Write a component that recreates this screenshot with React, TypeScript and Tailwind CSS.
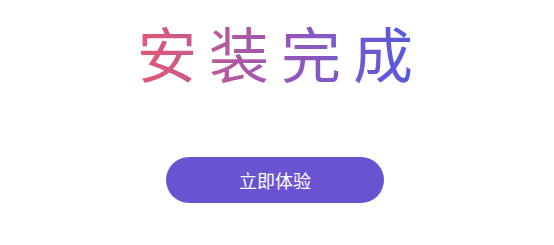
export default function App() {
  return (
    <div className="flex h-[245px] w-full flex-col items-center bg-white pr-[4px] font-['Noto_Sans_CJK_SC',sans-serif]">
      <h1 className="mt-[12px] bg-gradient-to-r from-[#ec5468] via-[#9a55b4] to-[#4a58e4] bg-clip-text pl-[12px] text-[60px] leading-[80px] font-normal tracking-[12px] text-transparent">
        安装完成
      </h1>
      <button className="mt-[65px] h-[46px] w-[218px] rounded-full bg-[#6953d1] text-[18px] text-white">
        立即体验
      </button>
    </div>
  )
}
